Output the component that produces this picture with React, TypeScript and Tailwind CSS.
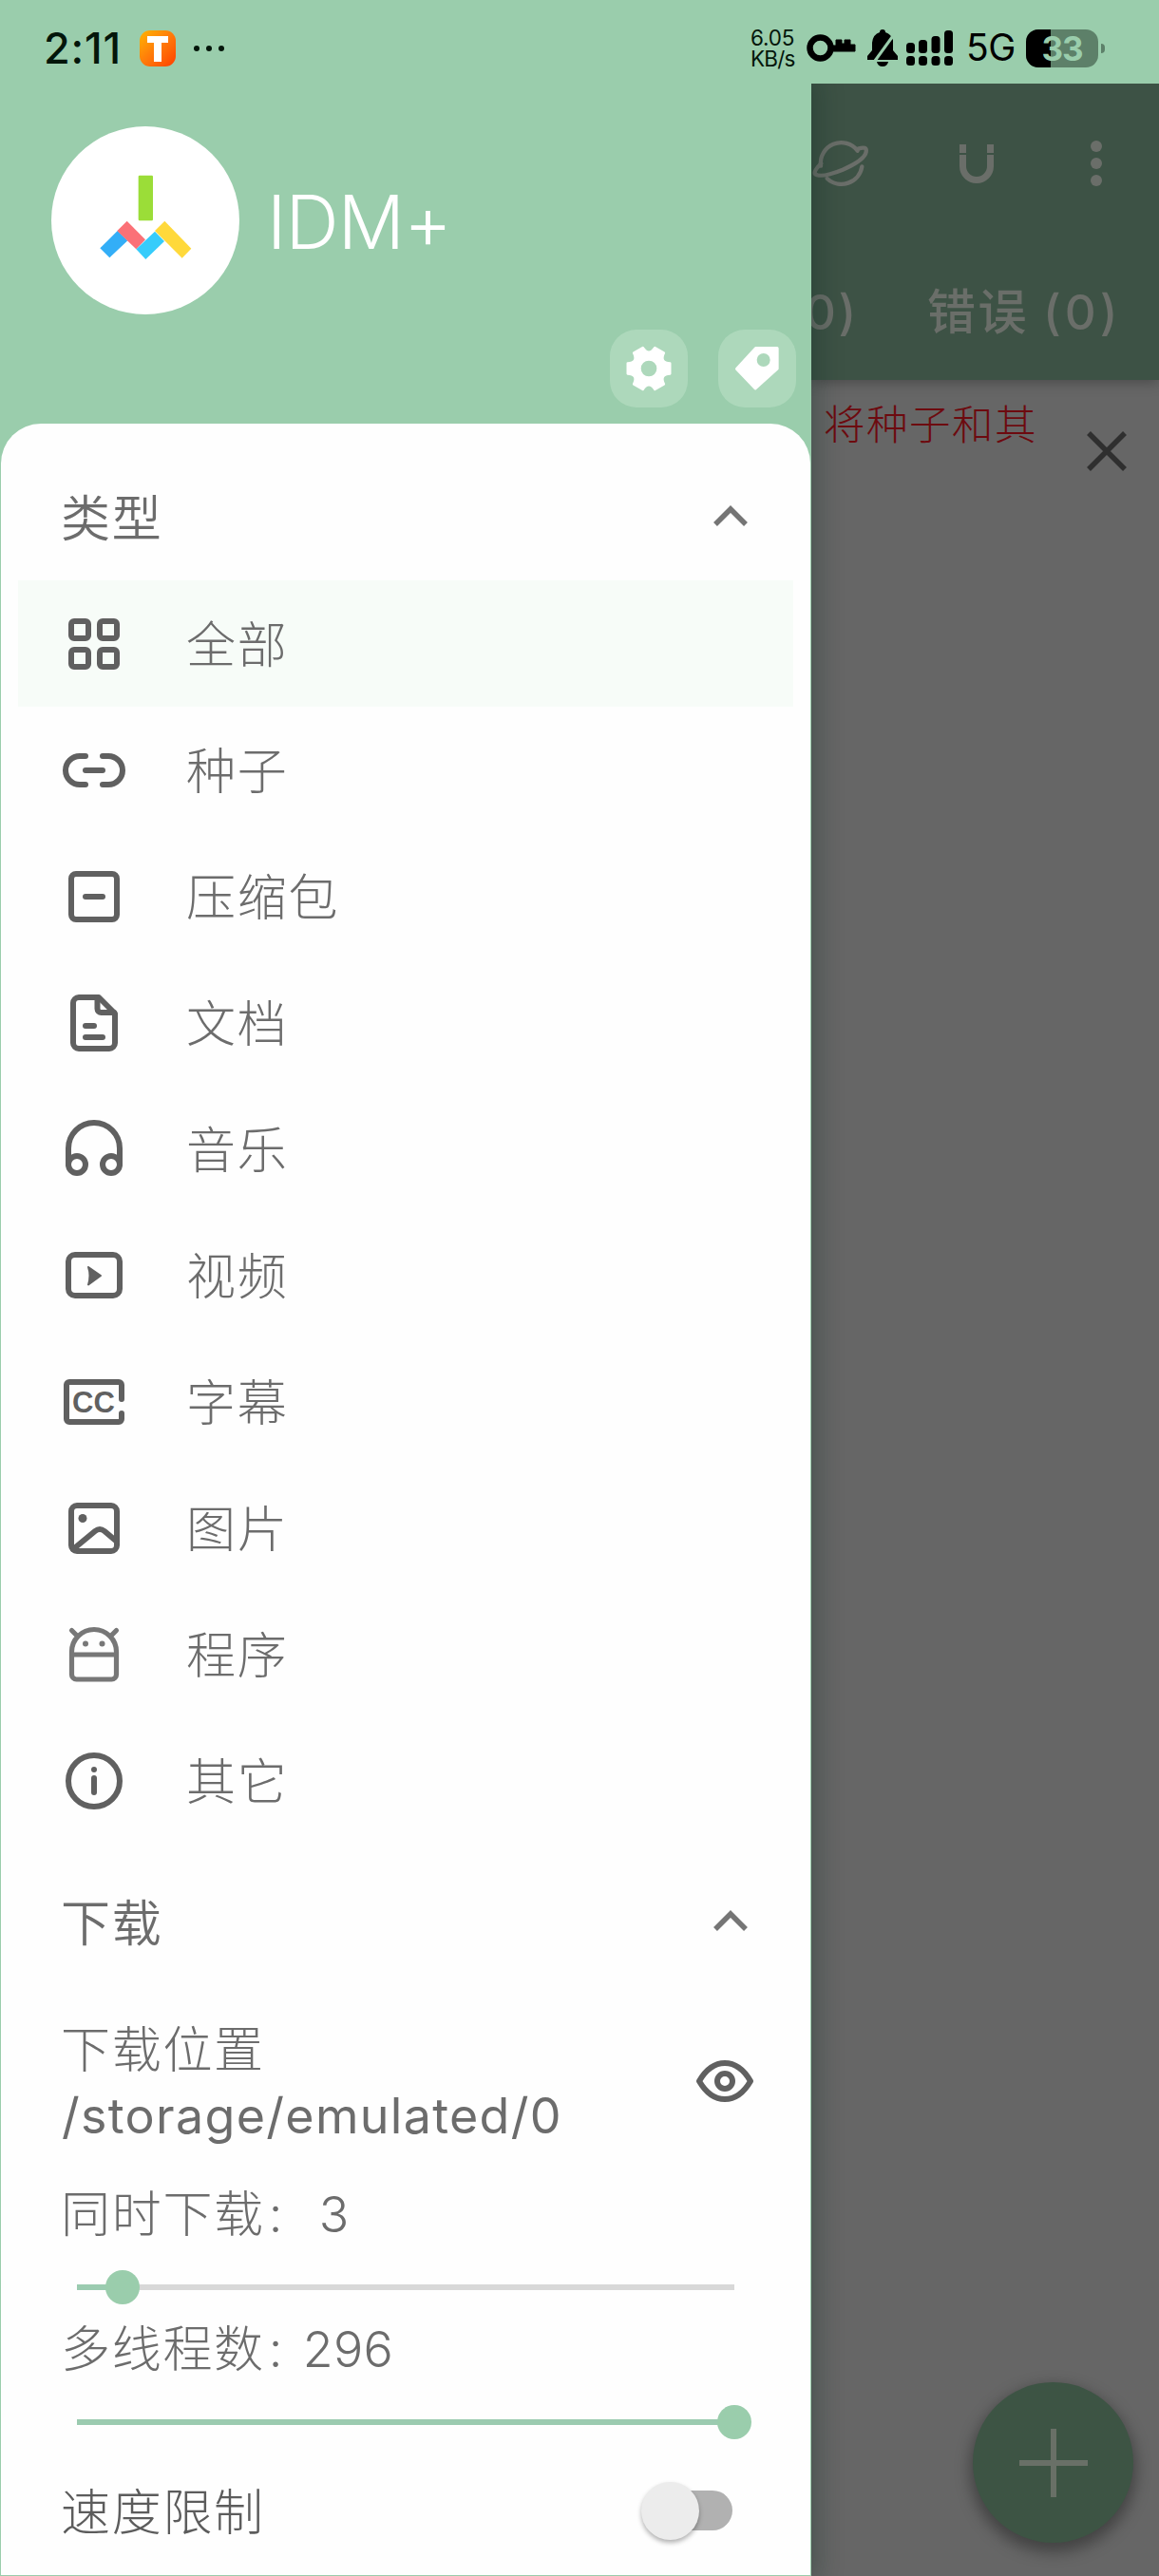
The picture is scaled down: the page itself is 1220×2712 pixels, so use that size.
import type { ReactNode } from 'react';

interface Category {
  label: string;
  icon: ReactNode;
  faded?: boolean;
}

const categories: Category[] = [
  {
    label: '全部',
    icon: (
      <>
        <rect x="8" y="8" width="18" height="18" rx="3" />
        <rect x="38" y="8" width="18" height="18" rx="3" />
        <rect x="8" y="38" width="18" height="18" rx="3" />
        <rect x="38" y="38" width="18" height="18" rx="3" />
      </>
    ),
  },
  {
    label: '种子',
    icon: <path d="M23 17h-6a15 15 0 0 0 0 30h6M41 17h6a15 15 0 0 1 0 30h-6M23 32h18" />,
  },
  {
    label: '压缩包',
    icon: (
      <>
        <rect x="8" y="8" width="48" height="48" rx="5" />
        <path d="M23 32h18" />
      </>
    ),
  },
  {
    label: '文档',
    icon: (
      <>
        <path d="M37 5H16a6 6 0 0 0-6 6v42a6 6 0 0 0 6 6h32a6 6 0 0 0 6-6V22z" />
        <path d="M35.500 6v11a4 4 0 0 0 4 4H53M23 35h9M23 47h18" />
      </>
    ),
  },
  {
    label: '音乐',
    icon: (
      <>
        <path d="M5 48V31a27 27 0 0 1 54 0v17" />
        <circle cx="14" cy="48" r="9" />
        <circle cx="50" cy="48" r="9" />
      </>
    ),
  },
  {
    label: '视频',
    icon: (
      <>
        <rect x="5" y="10" width="54" height="43" rx="7" />
        <path d="M26 23 39 32 26 41.500q3-9.500 0-18.500z" fill="currentColor" strokeWidth="2" />
      </>
    ),
  },
  {
    label: '字幕',
    icon: (
      <>
        <path d="M61 29V14a3 3 0 0 0-3-3H6a3 3 0 0 0-3 3v36a3 3 0 0 0 3 3h52a3 3 0 0 0 3-3v-6" />
        <text
          x="9"
          y="43"
          fontSize="31"
          fontWeight="700"
          fill="currentColor"
          stroke="none"
          className="font-['Liberation_Sans',sans-serif]"
        >
          CC
        </text>
      </>
    ),
  },
  {
    label: '图片',
    icon: (
      <>
        <rect x="8" y="8" width="48" height="48" rx="6" />
        <circle cx="20" cy="21.500" r="4.500" fill="currentColor" stroke="none" />
        <path d="m10 54 23-19q5-4 10 0l13 11" />
      </>
    ),
  },
  {
    label: '程序',
    faded: true,
    icon: (
      <>
        <path d="M8.500 29a23.500 23.500 0 0 1 47 0v24a5 5 0 0 1-5 5h-37a5 5 0 0 1-5-5zM9 32h46M8.500 6.500l5 5M55.500 6.500l-5 5" />
        <circle cx="23" cy="20.500" r="3" fill="currentColor" stroke="none" />
        <circle cx="40.500" cy="20.500" r="3" fill="currentColor" stroke="none" />
      </>
    ),
  },
  {
    label: '其它',
    icon: (
      <>
        <circle cx="32" cy="32" r="27" />
        <circle cx="32" cy="20" r="3" fill="currentColor" stroke="none" />
        <path d="M32 29v15" />
      </>
    ),
  },
];

// Six rounded teeth around the centre of the gear
const gearPath = () => {
  const point = (deg: number, r: number) => {
    const rad = (deg * Math.PI) / 180;
    return `${(72 + r * Math.cos(rad)).toFixed(1)} ${(72 + r * Math.sin(rad)).toFixed(1)}`;
  };
  let d = '';
  for (let i = 0; i < 6; i++) {
    const a = i * 60;
    d += `${i === 0 ? 'M' : 'L'}${point(a - 14, 69)}L${point(a + 14, 69)}Q${point(a + 30, 38)} ${point(a + 46, 69)}`;
  }
  return `${d}Z`;
};

const StatusBar = () => (
  <div className="flex h-[88px] shrink-0 items-start bg-[#9acdac] text-[#04160a]">
    <span className="ml-[46px] mt-[24px] w-[101px] text-[45px] font-medium leading-[54px] tracking-[0.8px]">2:11</span>
    <div className="mt-[32px] flex h-[38px] w-[38px] items-center justify-center rounded-[11px] bg-linear-to-br from-[#ffb300] via-[#ff7a0a] to-[#ff3a00]">
      <svg viewBox="0 0 22 27" className="h-[27px] w-[22px]" fill="#fff">
        <rect width="22" height="7" />
        <rect x="7" width="8" height="27" />
      </svg>
    </div>
    <div className="ml-[19px] mt-[48px] flex gap-[7px]">
      <span className="h-[6px] w-[6px] rounded-full bg-[#04160a]" />
      <span className="h-[6px] w-[6px] rounded-full bg-[#04160a]" />
      <span className="h-[6px] w-[6px] rounded-full bg-[#04160a]" />
    </div>

    <div className="ml-auto flex w-[430px] items-start">
      <div className="mt-[29px] w-[59px] text-[22.500px] leading-[22px] tracking-[-0.8px]">
        <div className="tracking-[-0.2px]">6.05</div>
        <div>KB/s</div>
      </div>
      <svg viewBox="0 0 52 30" className="mt-[36px] h-[30px] w-[52px]">
        <circle cx="14.500" cy="14.500" r="11" fill="none" stroke="#000" strokeWidth="6.500" />
        <path d="M27 12h4V6h6v4h3V6h6v5h5v7H27z" fill="#000" stroke="#000" />
      </svg>
      <svg viewBox="0 0 32 39" className="ml-[12px] mt-[31px] h-[39px] w-[32px]" fill="#000">
        <path d="M13 3a3 3 0 0 1 6 0q6 2 8 8v11l5 6v4H0v-4l5-6V14Q6 5 13 3z" />
        <path d="M10 34h12q-1 5-6 5t-6-5z" />
        <path d="M8 33 29 4" stroke="#9acdac" strokeWidth="3" />
      </svg>
      <svg viewBox="0 0 49 38" className="ml-[9px] mt-[32px] h-[38px] w-[49px]" fill="#000">
        <rect x="0" y="13" width="9" height="11" rx="3.500" />
        <rect x="13" y="10" width="9" height="14" rx="3.500" />
        <rect x="26.500" y="6" width="9" height="18" rx="3.500" />
        <rect x="40" y="0" width="9" height="24" rx="3.500" />
        <rect x="0" y="27" width="9" height="10" rx="3.500" />
        <rect x="13" y="27" width="9" height="10" rx="3.500" />
        <rect x="26.500" y="27" width="9" height="10" rx="3.500" />
        <rect x="40" y="27" width="9" height="10" rx="3.500" />
      </svg>
      <span className="ml-[14px] mt-[26px] w-[63px] text-[39px] leading-[48px] tracking-[-0.5px] text-black">5G</span>
      <div className="relative mt-[31px] flex h-[40px] w-[76px] items-center justify-center overflow-hidden rounded-[13px] bg-[#5d8069]">
        <span className="absolute inset-y-0 left-0 w-[26px] bg-black" />
        <span className="relative text-[35px] font-bold leading-[40px] tracking-[-1px] text-[#9acdac]">33</span>
      </div>
      <span className="ml-[3px] mt-[46px] h-[10px] w-[4px] rounded-r-full bg-[#5d8069]" />
    </div>
  </div>
);

const Logo = () => (
  <div className="h-[198px] w-[198px] rounded-full bg-white">
    <svg viewBox="162 399 594 594" className="h-full w-full">
      <rect x="437" y="554" width="46" height="143" rx="4" fill="#9bdd38" />
      <path d="m316 784 30 30 57-54-32-31z" fill="#33aef7" />
      <path d="m401 698-31 31 60 58 29-30z" fill="#fb7177" />
      <path d="m430 787 30 32 59-57-30-31z" fill="#36ccfb" />
      <path d="m520 698-31 31 86 86 29-30z" fill="#ffd93b" />
    </svg>
  </div>
);

const Chevron = () => (
  <svg viewBox="0 0 36 24" className="h-[24px] w-[36px]" fill="none" stroke="#757575" strokeWidth="5.500">
    <path d="m2 21 16-16 16 16" />
  </svg>
);

const SectionTitle = ({ title }: { title: string }) => (
  <div className="flex h-[64px] items-center justify-between pl-[63px] pr-[66px]">
    <span className="pt-[7px] text-[52px] font-[350] leading-[64px] tracking-[1.800px] text-[#6c6c6c]">{title}</span>
    <Chevron />
  </div>
);

const Slider = ({ percent }: { percent: number }) => (
  <div className="relative ml-[80px] flex h-[36px] w-[692px] items-center">
    <div className="h-[6px] w-full bg-[#d8d8d8]">
      <div className="h-full bg-[#9bcbb0]" style={{ width: `${percent}%` }} />
    </div>
    <span className="absolute h-[36px] w-[36px] -translate-x-1/2 rounded-full bg-[#9acdac]" style={{ left: `${percent}%` }} />
  </div>
);

const Drawer = () => (
  <div className="relative z-10 flex w-[854px] shrink-0 flex-col bg-[#9acdac] shadow-[0_0_26px_6px_rgba(10,40,30,0.32)] [clip-path:inset(0_-60px_0_0)]">
    <div className="flex h-[259px] items-start pl-[54px] pt-[45px]">
      <Logo />
      <span className="ml-[29px] mt-[53px] text-[78px] font-light leading-[96px] tracking-[-0.9px] text-white">IDM+</span>
    </div>
    <div className="flex h-[99px] items-start gap-[32px] pl-[642px]">
      <div className="flex h-[82px] w-[82px] items-center justify-center rounded-[28px] bg-[#add8bb]">
        <svg viewBox="0 0 144 144" className="h-[48px] w-[48px]">
          <path d={gearPath()} fill="#fff" stroke="#fff" strokeWidth="7" strokeLinejoin="round" />
          <circle cx="72" cy="72" r="25" fill="#add8bb" />
        </svg>
      </div>
      <div className="flex h-[82px] w-[82px] items-center justify-center rounded-[28px] bg-[#add8bb]">
        <svg viewBox="430 88 144 144" className="h-[48px] w-[48px]">
          <path
            d="M438 161 498 96h67v64l-69 62z"
            fill="#fff"
            stroke="#fff"
            strokeWidth="10"
            strokeLinejoin="round"
          />
          <circle cx="522" cy="133" r="21" fill="#add8bb" />
        </svg>
      </div>
    </div>

    <div className="mb-px ml-px mr-px flex h-[2265px] flex-col rounded-t-[42px] bg-[#fefefe] pt-[65px]">
      <SectionTitle title="类型" />

      {/* Categories */}
      <div className="mt-[36px] flex flex-col">
        {categories.map((item, i) => (
          <div
            key={item.label}
            className={`mx-[18px] flex h-[133px] items-center pl-[48px] ${i === 0 ? 'bg-[#f7fcf8]' : ''}`}
          >
            <svg
              viewBox="0 0 64 64"
              className={`h-[64px] w-[64px] overflow-visible ${item.faded ? 'text-[#777777]' : 'text-[#606060]'}`}
              fill="none"
              stroke="currentColor"
              strokeWidth={item.faded ? 5.2 : 6}
              strokeLinecap="round"
              strokeLinejoin="round"
            >
              {item.icon}
            </svg>
            <span className="ml-[65px] pt-[5px] text-[52px] font-light leading-[64px] tracking-[1.700px] text-[#6c6c6c]">
              {item.label}
            </span>
          </div>
        ))}
      </div>

      {/* Download settings */}
      <div className="mt-[49px]">
        <SectionTitle title="下载" />
      </div>
      <div className="mt-[68px] flex h-[138px] items-center pl-[63px] pr-[59px]">
        <div className="flex-1 pt-[4px] text-[#6c6c6c]">
          <div className="text-[52px] font-light leading-[69px] tracking-[1.700px]">下载位置</div>
          <div className="pl-[1px] text-[52px] leading-[69px] tracking-[1.300px]">/storage/emulated/0</div>
        </div>
        <svg viewBox="0 0 62 44" className="h-[44px] w-[62px]" fill="none" stroke="#606060" strokeWidth="6">
          <path d="M4 22Q15 3 31 3t27 19Q47 41 31 41T4 22z" strokeLinejoin="round" />
          <circle cx="31" cy="22" r="8" />
        </svg>
      </div>
      <div className="mt-[40px] pl-[63px] text-[52px] font-light leading-[64px] tracking-[1.700px] text-[#6c6c6c]">
        同时下载<span className="mr-[33px] inline-block w-[24px] pl-[4px]">:</span>3
      </div>
      <div className="mt-[26px]">
        <Slider percent={7} />
      </div>
      <div className="mt-[16px] pl-[63px] text-[52px] font-light leading-[64px] tracking-[1.700px] text-[#6c6c6c]">
        多线程数<span className="mr-[16px] inline-block w-[24px] pl-[4px]">:</span>
        <span className="tracking-[0.3px]">296</span>
      </div>
      <div className="mt-[26px]">
        <Slider percent={100} />
      </div>
      <div className="mt-[43px] flex h-[64px] items-center justify-between pl-[63px] pr-[82px]">
        <span className="pt-[6px] text-[52px] font-light leading-[64px] tracking-[1.700px] text-[#5c5c5c]">速度限制</span>
        <div className="relative flex h-[42px] w-[84px] items-center rounded-full bg-[#b1b1b1]">
          <span className="absolute -left-[12px] h-[61px] w-[61px] rounded-full bg-[#ececec] shadow-[0_3px_5px_rgba(0,0,0,0.3)]" />
        </div>
      </div>
    </div>
  </div>
);

const Content = () => (
  <div className="relative flex flex-1 flex-col overflow-hidden bg-[#666666]">
    <div className="flex h-[312px] shrink-0 flex-col bg-[#3d5245] text-[#6a6e69] shadow-[0_2px_14px_rgba(0,0,0,0.3)]">
      <div className="flex h-[168px] items-center">
        <svg
          viewBox="12 48 186 156"
          className="h-[52px] w-[62px]"
          fill="none"
          stroke="currentColor"
          strokeWidth="13"
          strokeLinecap="round"
          strokeLinejoin="round"
        >
          <path d="M172 136A66 66 0 0 1 62 174M42 134A65 65 0 0 1 158 86" />
          <path d="M160 80q29-10 25 10-5 26-74 56-72 29-88 12-2-10 20-32" />
        </svg>
        <svg viewBox="0 0 36 41" className="ml-[94px] h-[41px] w-[36px]" fill="currentColor">
          <path d="M0 0h7v9H0zM29 0h7v9h-7zM0 11h7v12a11 11 0 0 0 22 0V11h7v12a18 18 0 0 1-36 0z" />
        </svg>
        <div className="ml-[102px] flex flex-col gap-[6px]">
          <span className="h-[12px] w-[12px] rounded-full bg-[#6a6e69]" />
          <span className="h-[12px] w-[12px] rounded-full bg-[#6a6e69]" />
          <span className="h-[12px] w-[12px] rounded-full bg-[#6a6e69]" />
        </div>
      </div>
      <div className="flex h-[144px] items-center pt-[2px] text-[51px] font-medium leading-[72px]">
        <span className="-ml-[7px] w-[129px] tracking-[2.500px]">0)</span>
        <span className="whitespace-nowrap tracking-[2.500px]">错误</span>
        <span className="ml-[15px] tracking-[4px]">(0)</span>
      </div>
    </div>
    <div className="flex h-[150px] items-start pl-[13px] pt-[17px]">
      <span className="w-[277px] text-[43.500px] font-light leading-[60px] tracking-[1.500px] text-[#6d0a0f]">将种子和其</span>
      <svg viewBox="0 0 42 42" className="mt-[37px] h-[42px] w-[42px]" stroke="#2f2f2f" strokeWidth="5.500">
        <path d="m2 2 38 38M40 2 2 40" />
      </svg>
    </div>
    <div className="mb-[35px] ml-[170px] mt-auto flex h-[169px] w-[169px] items-center justify-center rounded-full bg-[#3d5444] shadow-[0_7px_16px_3px_rgba(0,0,0,0.35)]">
      <svg viewBox="0 0 72 72" className="h-[72px] w-[72px]" fill="#697067">
        <path d="M0 33h72v6H0z" />
        <path d="M33 0h6v72h-6z" />
      </svg>
    </div>
  </div>
);

const App = () => {
  return (
    <div className="flex h-[2712px] w-[1220px] flex-col overflow-hidden bg-[#9acdac] font-['Inter','Noto_Sans_CJK_SC',sans-serif]">
      <StatusBar />
      <div className="flex flex-1">
        <Drawer />
        <Content />
      </div>
    </div>
  );
};

export default App;
